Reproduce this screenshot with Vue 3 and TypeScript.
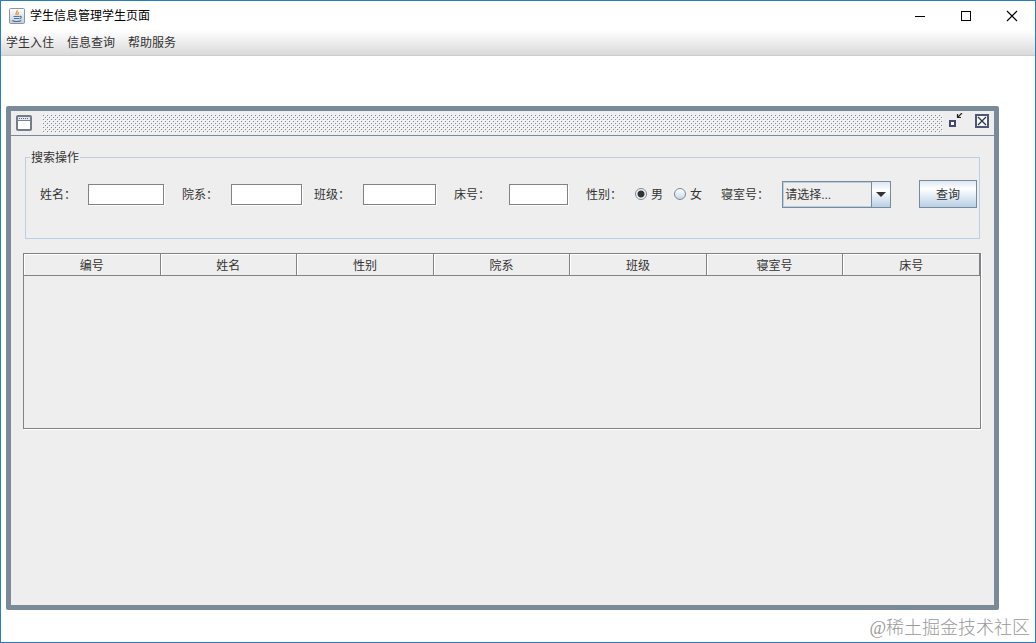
<script setup lang="ts">
import { ref } from 'vue'

interface Field {
  id: string
  label: string
}

const menus: string[] = ['学生入住', '信息查询', '帮助服务']
const fields: Field[] = [
  { id: 'name', label: '姓名：' },
  { id: 'dept', label: '院系：' },
  { id: 'grade', label: '班级：' },
  { id: 'bed', label: '床号：' },
]
const columns: string[] = ['编号', '姓名', '性别', '院系', '班级', '寝室号', '床号']
const values = ref<Record<string, string>>({ name: '', dept: '', grade: '', bed: '' })
const gender = ref('男')
const room = ref('')
</script>

<template>
  <div class="window" lang="zh-CN">
    <header class="titlebar">
      <svg class="java" width="16" height="16" viewBox="0 0 16 16" aria-hidden="true">
        <defs>
          <linearGradient id="tile" x1="0" y1="0" x2="0" y2="1">
            <stop offset="0" stop-color="#fdfdfd" />
            <stop offset="1" stop-color="#c3ced8" />
          </linearGradient>
        </defs>
        <rect x=".5" y=".5" width="15" height="15" rx="1" fill="url(#tile)" stroke="#8796a5" />
        <path d="M8.2 2.2c.8 1.6-2.6 2.8-.8 5M10 4.4C8.4 5.2 8.6 6 9 7.2" fill="none" stroke="#e08a35" stroke-width="1.2" />
        <path d="M4.5 8.5h6M5 10.5h5M10.8 8.4c2.2-.4 1.8 1.8-.2 2.2M3.2 12.4c2.4 1.2 6.6 1.2 9 0" fill="none" stroke="#49779f" stroke-width="1.1" />
      </svg>
      <span class="title">学生信息管理学生页面</span>
      <div class="controls">
        <button type="button" aria-label="最小化">
          <svg width="12" height="12" viewBox="0 0 12 12"><path d="M1 6.5h10" stroke="#000" /></svg>
        </button>
        <button type="button" aria-label="最大化">
          <svg width="12" height="12" viewBox="0 0 12 12"><rect x="1.5" y="1.5" width="9" height="9" fill="none" stroke="#000" /></svg>
        </button>
        <button type="button" aria-label="关闭">
          <svg width="12" height="12" viewBox="0 0 12 12"><path d="M1 1l10 10M11 1L1 11" stroke="#000" stroke-width="1.1" /></svg>
        </button>
      </div>
    </header>
    <nav class="menubar">
      <button v-for="m in menus" :key="m" type="button">{{ m }}</button>
    </nav>

    <main class="desktop">
      <section class="frame">
        <div class="frame-title">
          <svg width="16" height="16" viewBox="0 0 16 16" aria-hidden="true">
            <rect x="1" y="1" width="14" height="14" rx="1" fill="#fff" stroke="#737c88" stroke-width="2" />
            <path d="M2 2h12v3H2z" fill="#e3e8ee" />
            <path d="M3 3.5h10" stroke="#5f6872" stroke-dasharray="1 1" />
            <path d="M2 5.5h12" stroke="#7a8490" />
          </svg>
          <svg class="bumps" height="19" aria-hidden="true">
            <defs>
              <pattern id="bump" width="4" height="4" patternUnits="userSpaceOnUse">
                <path d="M0 0h1v1H0zM2 2h1v1H2z" fill="#fff" />
                <path d="M1 1h1v1H1zM3 3h1v1H3z" fill="#7a8a99" />
              </pattern>
            </defs>
            <rect width="100%" height="19" fill="url(#bump)" shape-rendering="crispEdges" />
          </svg>
          <button type="button" aria-label="还原">
            <svg width="16" height="16" viewBox="0 0 16 16">
              <rect x="3" y="8" width="5" height="5" fill="#fff" stroke="#3f4a78" stroke-width="2" />
              <path d="M15 0l-4.5 4.5M10.5 1v3.5H14" fill="none" stroke="#222" stroke-width="1.2" />
            </svg>
          </button>
          <button type="button" aria-label="关闭窗口">
            <svg width="16" height="16" viewBox="0 0 16 16">
              <rect x="2" y="2" width="12" height="12" fill="#f6f8fa" stroke="#4d5674" stroke-width="2" />
              <path d="M4 4l8 8M12 4l-8 8" stroke="#30364a" stroke-width="1.3" />
            </svg>
          </button>
        </div>

        <div class="content">
          <form @submit.prevent>
            <fieldset>
              <legend>搜索操作</legend>
              <div class="row">
                <template v-for="f in fields" :key="f.id">
                  <label :for="f.id">{{ f.label }}</label>
                  <input :id="f.id" v-model="values[f.id]" type="text" :class="'input-' + f.id" />
                </template>
                <span class="label-gender">性别：</span>
                <label class="radio"><input v-model="gender" type="radio" name="gender" value="男" /><span>男</span></label>
                <label class="radio"><input v-model="gender" type="radio" name="gender" value="女" /><span>女</span></label>
                <label for="room" class="label-room">寝室号：</label>
                <div class="combo">
                  <select id="room" v-model="room">
                    <option value="">请选择...</option>
                  </select>
                  <span class="arrow">
                    <svg width="10" height="5" viewBox="0 0 10 5"><path d="M0 0h10L5 5z" fill="#333" /></svg>
                  </span>
                </div>
                <button type="submit" class="query">查询</button>
              </div>
            </fieldset>
          </form>

          <div class="scroll">
            <table>
              <thead>
                <tr>
                  <th v-for="c in columns" :key="c" scope="col">{{ c }}</th>
                </tr>
              </thead>
            </table>
          </div>
        </div>
      </section>
      <div class="watermark">@稀土掘金技术社区</div>
    </main>
  </div>
</template>

<style>
body {
  margin: 0;
}
</style>

<style scoped>
.window {
  box-sizing: border-box;
  min-height: 100vh;
  display: flex;
  flex-direction: column;
  border: 1px solid #2b7fb8;
  background: #fff;
  color: #333;
  font: 12px/16px "Liberation Sans", "Noto Sans CJK SC", sans-serif;
}
button,
input,
select {
  box-sizing: border-box;
  margin: 0;
  padding: 0;
  border: 0;
  background: none;
  color: inherit;
  font: inherit;
}
svg {
  display: block;
  flex: none;
}
.titlebar {
  display: flex;
  align-items: center;
  height: 29px;
  padding-left: 8px;
  color: #000;
}
.title {
  margin-left: 5px;
}
.controls {
  display: flex;
  margin-left: auto;
}
.controls button {
  display: grid;
  place-items: center;
  width: 46px;
  height: 28px;
}
.menubar {
  display: flex;
  gap: 13px;
  height: 25px;
  padding-left: 5px;
  border-bottom: 1px solid #ccc;
  background: linear-gradient(#fff, #dadada);
}
.desktop {
  position: relative;
  flex: 1;
  display: flex;
  padding: 50px 36px 32px 5px;
}
.frame {
  flex: 1;
  display: flex;
  flex-direction: column;
  min-width: 0;
  border: 5px solid #7a8a99;
  border-radius: 2px;
  background: #eee;
}
.frame-title {
  display: flex;
  align-items: center;
  height: 24px;
  padding: 0 4px 0 5px;
  border-bottom: 1px solid #7a8a99;
}
.bumps {
  flex: 1;
  min-width: 0;
  margin: 0 4px 0 10px;
}
.frame-title button {
  display: block;
  width: 16px;
  height: 20px;
  padding-bottom: 4px;
}
.frame-title button + button {
  margin-left: 11px;
}
.content {
  padding: 13px 13px 0 12px;
}
fieldset {
  min-width: 0;
  height: 90px;
  margin: 0 1px 0 2px;
  padding: 0;
  box-sizing: border-box;
  border: 1px solid #b8cfe5;
}
legend {
  margin-left: 4px;
  padding: 1px 1px 0;
}
.row {
  display: flex;
  align-items: center;
  height: 28px;
  margin-top: 14px;
  padding-left: 14px;
  white-space: nowrap;
}
.row label,
.label-gender {
  padding-top: 2px;
}
.row input[type="text"] {
  height: 21px;
  padding: 0 3px;
  border: 1px solid #7f8388;
  background: #fff;
  box-shadow: 1px 1px #fff;
}
.row .input-name {
  width: 76px;
  margin: 0 18px 0 12px;
}
.row .input-dept {
  width: 71px;
  margin: 0 12px 0 13px;
}
.row .input-grade {
  width: 73px;
  margin: 0 18px 0 13px;
}
.row .input-bed {
  width: 59px;
  margin: 0 18px 0 19px;
}
.label-gender {
  margin-right: 13px;
}
.row .radio {
  display: flex;
  align-items: center;
  gap: 4px;
  margin-right: 11px;
  padding-top: 0;
}
.radio span {
  padding-top: 2px;
}
.radio input {
  appearance: none;
  width: 12px;
  height: 12px;
  border: 1px solid #7a8a99;
  border-radius: 50%;
  background: linear-gradient(#fff, #dfe8ef 60%, #c4d6e4);
}
.radio input:checked {
  background: radial-gradient(circle, #333 3px, transparent 4px), #f4f7fa;
}
.label-room {
  margin: 0 13px 0 8px;
}
.combo {
  box-sizing: border-box;
  display: flex;
  width: 109px;
  height: 27px;
  border: 1px solid #7a8a99;
  box-shadow: inset 0 0 0 1px #b8cfe5;
}
.combo select {
  appearance: none;
  flex: 1;
  min-width: 0;
  padding: 2px 0 0 2px;
}
.arrow {
  display: grid;
  place-items: center;
  width: 18px;
  border-left: 1px solid #7a8a99;
  background: linear-gradient(#dde8f3, #fff 35%, #b8cfe5);
}
.query {
  width: 58px;
  height: 28px;
  margin: 0 2px 0 auto;
  padding-top: 1px;
  border: 1px solid #7a8a99;
  background: linear-gradient(#dde8f3, #fff 30%, #b8cfe5);
}
.scroll {
  height: 174px;
  margin-top: 14px;
  border: 1px solid #7f8388;
  box-shadow: 1px 1px #fff;
}
table {
  width: 100%;
  table-layout: fixed;
  border-collapse: separate;
  border-spacing: 0;
}
th {
  height: 19px;
  padding: 2px 0 0;
  border-right: 1px solid #7f8388;
  border-bottom: 1px solid #7f8388;
  box-shadow: inset 1px 1px #fff;
  font-weight: normal;
}
.watermark {
  position: absolute;
  right: 5px;
  bottom: 2px;
  color: #999;
  font: 300 18px/24px "Liberation Serif", "Noto Sans CJK SC", serif;
}
</style>
